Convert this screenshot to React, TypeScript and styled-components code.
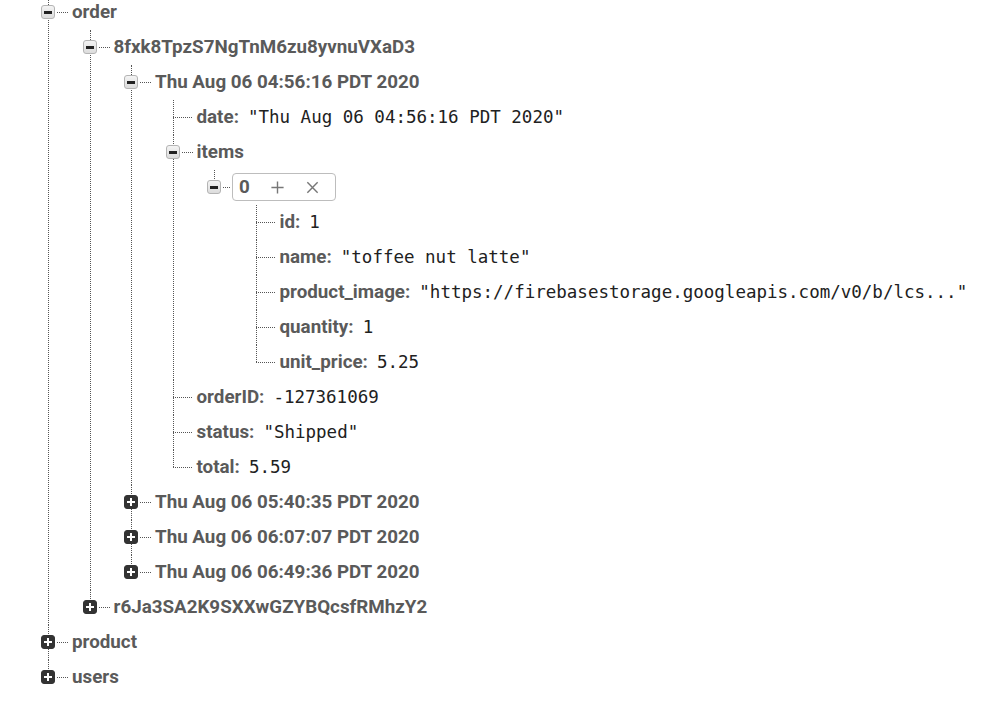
import { useState } from 'react';
import styled, { createGlobalStyle, css } from 'styled-components';

interface TreeNode {
  key: string;
  value?: string;
  open?: boolean;
  selected?: boolean;
  children?: TreeNode[];
}

const closedOrder = (key: string): TreeNode => ({ key, children: [] });

const DATA: TreeNode[] = [
  {
    key: 'order',
    open: true,
    children: [
      {
        key: '8fxk8TpzS7NgTnM6zu8yvnuVXaD3',
        open: true,
        children: [
          {
            key: 'Thu Aug 06 04:56:16 PDT 2020',
            open: true,
            children: [
              { key: 'date', value: '"Thu Aug 06 04:56:16 PDT 2020"' },
              {
                key: 'items',
                open: true,
                children: [
                  {
                    key: '0',
                    open: true,
                    selected: true,
                    children: [
                      { key: 'id', value: '1' },
                      { key: 'name', value: '"toffee nut latte"' },
                      {
                        key: 'product_image',
                        value: '"https://firebasestorage.googleapis.com/v0/b/lcs..."',
                      },
                      { key: 'quantity', value: '1' },
                      { key: 'unit_price', value: '5.25' },
                    ],
                  },
                ],
              },
              { key: 'orderID', value: '-127361069' },
              { key: 'status', value: '"Shipped"' },
              { key: 'total', value: '5.59' },
            ],
          },
          closedOrder('Thu Aug 06 05:40:35 PDT 2020'),
          closedOrder('Thu Aug 06 06:07:07 PDT 2020'),
          closedOrder('Thu Aug 06 06:49:36 PDT 2020'),
        ],
      },
      closedOrder('r6Ja3SA2K9SXXwGZYBQcsfRMhzY2'),
    ],
  },
  closedOrder('product'),
  closedOrder('users'),
];

const GlobalStyle = createGlobalStyle`
  html, body {
    margin: 0;
    background: #fff;
    font-family: Roboto, "Liberation Sans", Arial, sans-serif;
    overflow: hidden;
  }
`;

function TreeItem({ node, last }: { node: TreeNode; last: boolean }) {
  const [open, setOpen] = useState(!!node.open);
  const isLeaf = node.value !== undefined;

  const label = (
    <Key>
      {node.key}
      {isLeaf && ':'}
    </Key>
  );

  return (
    <Item $last={last}>
      <Row>
        {isLeaf ? (
          <LeafDash />
        ) : (
          <>
            <Toggle $open={open} onClick={() => setOpen(!open)}>
              {open ? <Minus /> : <PlusMark />}
            </Toggle>
            <Dash $short={node.selected} />
          </>
        )}
        {node.selected ? (
          <Selected>
            {label}
            <ActionIcon viewBox="0 0 16 16">
              <path d="M8 1.5v13M1.5 8h13" />
            </ActionIcon>
            <ActionIcon viewBox="0 0 16 16">
              <path d="M2.5 2.5l11 11M13.5 2.5l-11 11" />
            </ActionIcon>
          </Selected>
        ) : (
          label
        )}
        {isLeaf && <Value>{node.value}</Value>}
      </Row>
      {open && node.children && node.children.length > 0 && (
        <Children>
          {node.children.map((child, i) => (
            <TreeItem
              key={child.key}
              node={child}
              last={i === node.children!.length - 1}
            />
          ))}
        </Children>
      )}
    </Item>
  );
}

export default function App() {
  return (
    <>
      <GlobalStyle />
      <Tree>
        {DATA.map((node, i) => (
          <TreeItem key={node.key} node={node} last={i === DATA.length - 1} />
        ))}
      </Tree>
    </>
  );
}

const dotted = '1px dotted #555';

const Tree = styled.ul`
  list-style: none;
  margin: -5.5px 0 0;
  padding: 0 0 0 41px;
`;

const Children = styled.ul`
  list-style: none;
  margin: 0;
  padding: 0 0 0 41.5px;
`;

const Item = styled.li<{ $last: boolean }>`
  position: relative;
  &::before {
    content: '';
    position: absolute;
    left: 7px;
    top: 0;
    border-left: ${dotted};
    ${({ $last }) =>
      $last
        ? css`
            height: 17.5px;
          `
        : css`
            bottom: 0;
          `}
  }
`;

const Row = styled.div`
  position: relative;
  display: flex;
  align-items: center;
  height: 35px;
  white-space: nowrap;
`;

const Toggle = styled.button<{ $open: boolean }>`
  position: relative;
  z-index: 1;
  flex: none;
  display: flex;
  align-items: center;
  justify-content: center;
  box-sizing: border-box;
  width: 14px;
  height: 14px;
  padding: 0;
  border-radius: 3px;
  cursor: pointer;
  ${({ $open }) =>
    $open
      ? css`
          background: linear-gradient(#f4f4f4, #dcdcdc);
          border: 1px solid #b4b4b4;
        `
      : css`
          background: #333;
          border: 1px solid #333;
        `}
`;

const Minus = styled.span`
  display: block;
  width: 8px;
  height: 3px;
  background: #222;
`;

const PlusMark = styled.span`
  position: relative;
  display: block;
  width: 8px;
  height: 8px;
  &::before,
  &::after {
    content: '';
    position: absolute;
    background: #fff;
  }
  &::before {
    left: 0;
    top: 3px;
    width: 8px;
    height: 2px;
  }
  &::after {
    left: 3px;
    top: 0;
    width: 2px;
    height: 8px;
  }
`;

const Dash = styled.span<{ $short?: boolean }>`
  flex: none;
  width: ${({ $short }) => ($short ? '7px' : '11px')};
  margin: 0 ${({ $short }) => ($short ? '2px' : '4px')} 0 2px;
  border-top: ${dotted};
`;

const LeafDash = styled.span`
  flex: none;
  width: 19px;
  margin: 0 5px 0 7px;
  border-top: ${dotted};
`;

const Key = styled.span`
  font-family: Roboto, "Liberation Sans", Arial, sans-serif;
  font-weight: 700;
  font-size: 18.8px;
  color: #5a5a5a;
`;

const Value = styled.span`
  margin-left: 9px;
  font-family: "DejaVu Sans Mono", "Liberation Mono", monospace;
  font-size: 17.5px;
  color: #212121;
`;

const Selected = styled.div`
  display: flex;
  align-items: center;
  gap: 20px;
  box-sizing: border-box;
  height: 28px;
  padding: 0 15px 0 6px;
  border: 1px solid #bdbdbd;
  border-radius: 4px;
  background: #fff;
`;

const ActionIcon = styled.svg`
  width: 15px;
  height: 15px;
  fill: none;
  stroke: #777;
  stroke-width: 1.5;
`;
